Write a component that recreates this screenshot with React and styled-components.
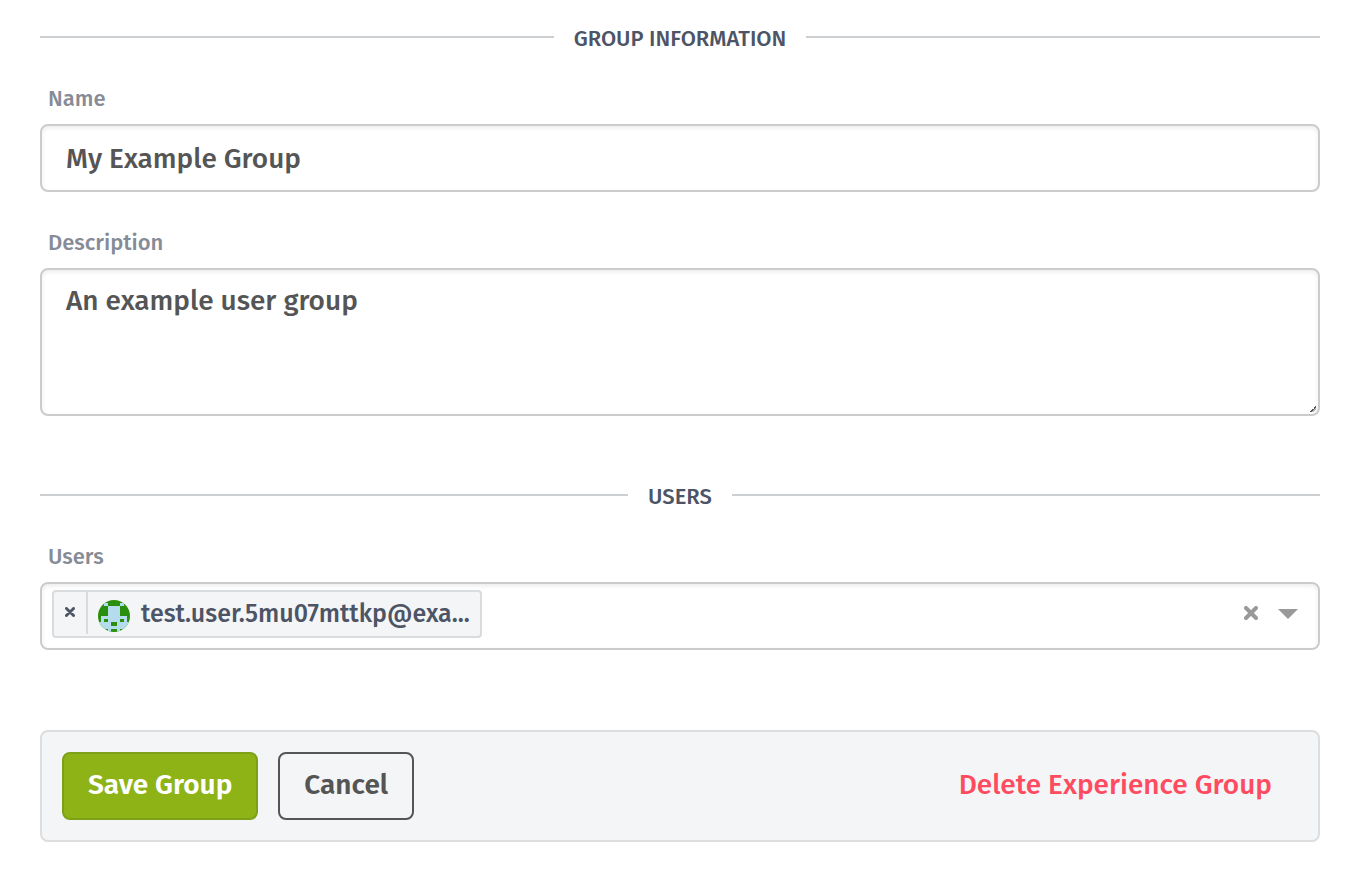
import React, { useState } from 'react';
import styled, { createGlobalStyle, css } from 'styled-components';

const GlobalStyle = createGlobalStyle`
  *, *::before, *::after { box-sizing: border-box; }
  body {
    margin: 0;
    background: #fff;
    color: #555;
    font-family: "Fira Sans", "Noto Sans", sans-serif;
    font-size: 28px;
    font-weight: 500;
  }
  button, input, textarea { font: inherit; color: inherit; }
`;

const Form = styled.form`
  padding: 27px 36px 36px 40px;
`;

const Section = styled.section`
  margin-bottom: ${(p) => p.$after}px;
`;

const Divider = styled.h2`
  display: flex;
  align-items: center;
  gap: 20px;
  height: 24px;
  margin: 0 0 33px;
  color: #4c5465;
  font-size: 22px;
  font-weight: 500;
  line-height: 24px;
  text-transform: uppercase;

  &::before, &::after {
    content: "";
    flex: 1;
    height: 2px;
    margin-bottom: 4px;
    background: #ccd0d2;
  }
`;

const Field = styled.div`
  display: flex;
  flex-direction: column;
  gap: 10px;

  & + & { margin-top: 36px; }
`;

const Label = styled.label`
  padding-left: 8px;
  color: #868b96;
  font-size: 22px;
  line-height: 30px;
`;

const box = css`
  width: 100%;
  border: 2px solid #ccc;
  border-radius: 8px;
  background: #fff;
  box-shadow: inset 0 2px 4px rgba(0, 0, 0, 0.08);
`;

const TextInput = styled.input`
  ${box}
  height: 68px;
  padding: 0 24px;
`;

const TextArea = styled.textarea`
  ${box}
  display: block;
  height: 148px;
  padding: 12px 24px;
  line-height: 38px;
  resize: vertical;

  &::-webkit-resizer {
    background:
      linear-gradient(135deg, transparent 50%, #555 50%, #555 64%, #bbb 64%, #bbb 76%, transparent 76%)
      7px 7px / 6px 6px no-repeat;
  }
`;

const Picker = styled.div`
  ${box}
  display: flex;
  align-items: center;
  height: 68px;
  padding: 0 20px 4px 10px;
`;

const Chip = styled.span`
  display: flex;
  align-items: center;
  height: 48px;
  border: 2px solid #d9dcdf;
  border-radius: 4px;
  background: #f4f5f7;
  color: #4c5465;
  font-size: 25px;
`;

const ChipRemove = styled.button`
  align-self: flex-start;
  display: flex;
  align-items: center;
  justify-content: center;
  width: 34px;
  height: 42px;
  padding: 0 0 2px;
  border: 0;
  border-right: 2px solid #d9dcdf;
  background: none;
`;

const ChipText = styled.span`
  display: flex;
  align-items: center;
  gap: 11px;
  padding: 0 10px;
  line-height: 44px;
`;

const Avatar = styled.svg`
  width: 32px;
  height: 32px;
  margin-top: 4px;
`;

const Search = styled.input`
  flex: 1;
  min-width: 0;
  border: 0;
  outline: 0;
  background: none;
`;

const IconButton = styled.button`
  display: flex;
  padding: 0 0 2px;
  border: 0;
  background: none;
  color: #999;
  margin-left: 20px;
`;

const Actions = styled.footer`
  display: flex;
  align-items: center;
  gap: 20px;
  padding: 20px;
  border: 2px solid #dcddde;
  border-radius: 8px;
  background: #f4f5f7;
`;

const variants = {
  primary: css`
    border-color: #7da118;
    background: #8eb317;
    color: #fff;
  `,
  outline: css`
    border-color: #555;
    background: transparent;
    color: #555;
  `,
  danger: css`
    margin-left: auto;
    border-color: transparent;
    background: transparent;
    color: #ff4b5f;
    font-weight: 500;
  `,
};

const Button = styled.button`
  height: 68px;
  padding: 0 24px 4px;
  border: 2px solid;
  border-radius: 8px;
  font-weight: 600;
  white-space: nowrap;
  ${(p) => variants[p.$variant]}
`;

const AVATAR_ROWS = [
  '..........',
  '..#....#..',
  '...####...',
  '...####...',
  '...####...',
  '.########.',
  '.#.####.#.',
  '####..####',
  '##########',
  '.#.#..#.#.',
];

const edge = (i) => Math.round(i * 3.2);

function UserAvatar() {
  return (
    <Avatar viewBox="0 0 32 32" aria-hidden="true">
      <clipPath id="avatar-round"><circle cx="16" cy="16" r="16" /></clipPath>
      <g clipPath="url(#avatar-round)">
        <rect width="32" height="32" fill="#2a8f0c" />
        {AVATAR_ROWS.flatMap((row, y) =>
          [...row].map((cell, x) =>
            cell === '#' ? (
              <rect
                key={`${x}-${y}`}
                x={edge(x)}
                y={edge(y)}
                width={edge(x + 1) - edge(x)}
                height={edge(y + 1) - edge(y)}
                fill="#b4dcec"
              />
            ) : null
          )
        )}
      </g>
    </Avatar>
  );
}

function Cross({ size, stroke }) {
  return (
    <svg width={size} height={size} viewBox="0 0 14 14" stroke="currentColor" strokeWidth={stroke} aria-hidden="true">
      <path d="M2 2 12 12M12 2 2 12" strokeLinecap="round" />
    </svg>
  );
}

export default function App() {
  const [name, setName] = useState('My Example Group');
  const [description, setDescription] = useState('An example user group');
  const [users, setUsers] = useState(['test.user.5mu07mttkp@exa...']);

  return (
    <>
      <GlobalStyle />
      <Form onSubmit={(e) => e.preventDefault()}>
        <Section $after={69}>
          <Divider>Group Information</Divider>
          <Field>
            <Label htmlFor="name">Name</Label>
            <TextInput id="name" value={name} onChange={(e) => setName(e.target.value)} />
          </Field>
          <Field>
            <Label htmlFor="description">Description</Label>
            <TextArea id="description" value={description} onChange={(e) => setDescription(e.target.value)} />
          </Field>
        </Section>
        <Section $after={80}>
          <Divider>Users</Divider>
          <Field>
            <Label htmlFor="users">Users</Label>
            <Picker>
              {users.map((user) => (
                <Chip key={user}>
                  <ChipRemove type="button" aria-label="Remove user" onClick={() => setUsers(users.filter((u) => u !== user))}>
                    <Cross size={10} stroke={4} />
                  </ChipRemove>
                  <ChipText><UserAvatar />{user}</ChipText>
                </Chip>
              ))}
              <Search id="users" role="combobox" aria-expanded="false" />
              <IconButton type="button" aria-label="Clear all" onClick={() => setUsers([])}>
                <Cross size={14} stroke={4} />
              </IconButton>
              <IconButton type="button" aria-label="Open list">
                <svg width="20" height="12" viewBox="0 0 20 12" aria-hidden="true"><path d="M0 2H20L10 12Z" fill="currentColor" /></svg>
              </IconButton>
            </Picker>
          </Field>
        </Section>
        <Actions>
          <Button type="submit" $variant="primary">Save Group</Button>
          <Button type="button" $variant="outline">Cancel</Button>
          <Button type="button" $variant="danger">Delete Experience Group</Button>
        </Actions>
      </Form>
    </>
  );
}
